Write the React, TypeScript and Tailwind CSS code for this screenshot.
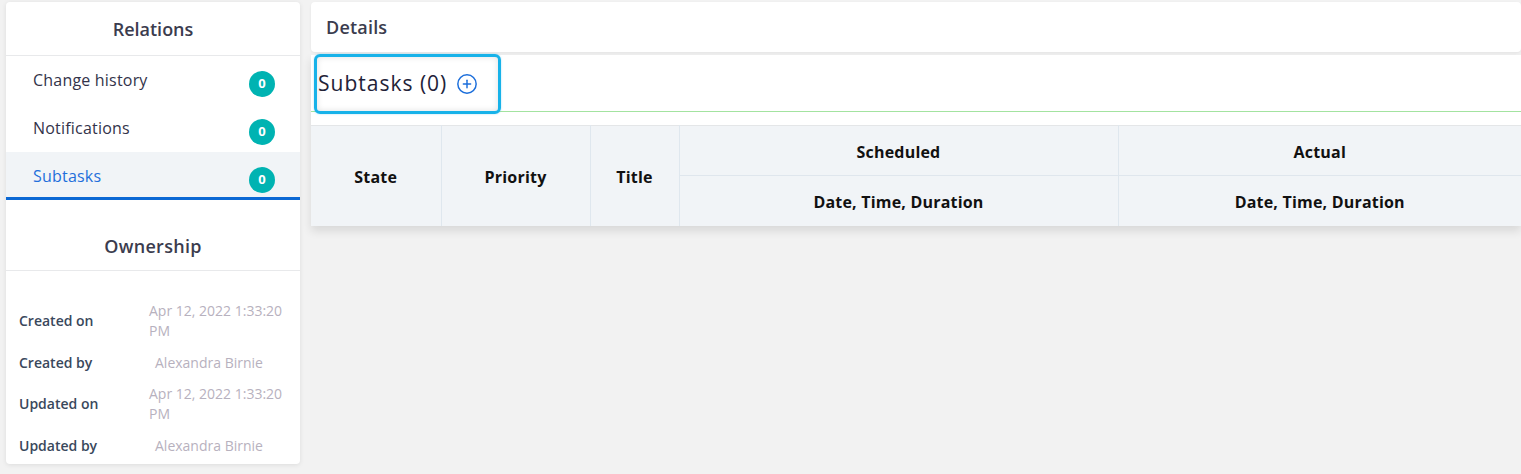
import { CirclePlus } from 'lucide-react';

type Relation = { label: string; count: number; active?: boolean };

const relations: Relation[] = [
  { label: 'Change history', count: 0 },
  { label: 'Notifications', count: 0 },
  { label: 'Subtasks', count: 0, active: true },
];

const ownership = [
  { label: 'Created on', value: 'Apr 12, 2022 1:33:20 PM' },
  { label: 'Created by', value: 'Alexandra Birnie', name: true },
  { label: 'Updated on', value: 'Apr 12, 2022 1:33:20 PM' },
  { label: 'Updated by', value: 'Alexandra Birnie', name: true },
];

function Sidebar() {
  return (
    <aside className="w-[294px] h-[462px] shrink-0 bg-white rounded-[4px] shadow-[0_1px_5px_rgba(0,0,0,0.09)] flex flex-col overflow-hidden">
      {/* Relations */}
      <div className="h-[54px] border-b border-[#e8e9eb] flex items-center justify-center pt-[2px] text-[18px] font-semibold text-[#3b3c4e]">
        Relations
      </div>
      {relations.map(r => (
        <div
          key={r.label}
          className={
            r.active
              ? 'h-12 flex items-center justify-between pl-[27px] pr-[25px] pt-[3px] bg-[#f1f4f7] border-b-[3px] border-[#0b68d4] text-[#1f6fdb]'
              : 'h-12 flex items-center justify-between pl-[27px] pr-[25px] text-[#33334a]'
          }
        >
          <span className="text-[16px] tracking-[0.2px] -mt-[1px]">{r.label}</span>
          <span className="w-[26px] h-[26px] rounded-full bg-[#00b3b2] text-white text-[13px] font-bold flex items-center justify-center mt-[7px]">
            {r.count}
          </span>
        </div>
      ))}

      {/* Ownership */}
      <div className="h-[71px] border-b border-[#e8e9eb] flex items-end justify-center pb-[10px] text-[18px] font-semibold text-[#3b3c4e] tracking-[0.3px]">
        Ownership
      </div>
      <div className="pt-[30px] pl-[13px] pr-[8px] flex flex-col gap-[11.5px] text-[14px] leading-[20px]">
        {ownership.map(o => (
          <div key={o.label} className="grid grid-cols-[130px_1fr] items-center">
            <span className="font-semibold text-[#39485c]">{o.label}</span>
            <span className={o.name ? 'pl-[6px] text-[#b7b1be]' : 'text-[#b7b1be] w-[142px]'}>{o.value}</span>
          </div>
        ))}
      </div>
    </aside>
  );
}

const th = 'border-r border-[#dfe7ee] bg-[#f1f4f7] pt-[3px] text-[16px] font-bold text-[#111] text-center tracking-[0.2px]';

function SubtasksTable() {
  return (
    <table className="w-full border-collapse table-fixed">
      <colgroup>
        <col className="w-[130px]" />
        <col className="w-[149px]" />
        <col className="w-[89px]" />
        <col className="w-[439px]" />
        <col />
      </colgroup>
      <thead>
        <tr className="h-[50px] border-t border-[#e4e6e8]">
          <th rowSpan={2} className={th}>State</th>
          <th rowSpan={2} className={th}>Priority</th>
          <th rowSpan={2} className={th}>Title</th>
          <th className={th + ' border-b border-b-[#dfe6ed]'}>Scheduled</th>
          <th className="bg-[#f1f4f7] pt-[3px] text-[16px] font-bold text-[#111] text-center tracking-[0.2px] border-b border-b-[#dfe6ed]">Actual</th>
        </tr>
        <tr className="h-[50px]">
          <th className={th + ' border-l border-l-[#a9c7dd]'}>Date, Time, Duration</th>
          <th className="bg-[#f1f4f7] pt-[3px] text-[16px] font-bold text-[#111] text-center tracking-[0.2px]">Date, Time, Duration</th>
        </tr>
      </thead>
    </table>
  );
}

export default function App() {
  return (
    <div
      className="flex gap-[11px] h-[474px] bg-[#f2f2f2] pl-[6px] pt-[2px] overflow-hidden"
      style={{ fontFamily: '"Open Sans", "Noto Sans", sans-serif' }}
    >
      <Sidebar />

      <main className="flex-1 flex flex-col gap-[3px]">
        {/* Details header */}
        <div className="h-[50px] bg-white rounded-[4px] shadow-[0_1px_3px_rgba(0,0,0,0.06)] flex items-center pl-[15px] text-[18px] font-semibold text-[#3b3c4e] tracking-[0.2px]">
          Details
        </div>

        {/* Subtasks panel */}
        <section className="relative bg-white shadow-[0_5px_9px_rgba(0,0,0,0.11)]">
          <div className="h-[57px] flex items-center gap-[9px] pl-[7px] pt-[2px] border-b border-[#a3e3a0]">
            <span className="text-[21px] text-[#222238] tracking-[1px]">Subtasks (0)</span>
            <CirclePlus size={22} strokeWidth={1.6} className="text-[#1b6edb]" />
          </div>
          <div className="h-[13px]" />
          <SubtasksTable />

          {/* focus outline around the section title */}
          <div className="absolute left-[3px] top-[-1px] w-[187px] h-[60px] border-[3px] border-[#17b2e9] rounded-[6px] shadow-[inset_0_0_6px_rgba(0,0,0,0.12),0_0_2px_rgba(23,178,233,0.4)] pointer-events-none" />
        </section>
      </main>
    </div>
  );
}
